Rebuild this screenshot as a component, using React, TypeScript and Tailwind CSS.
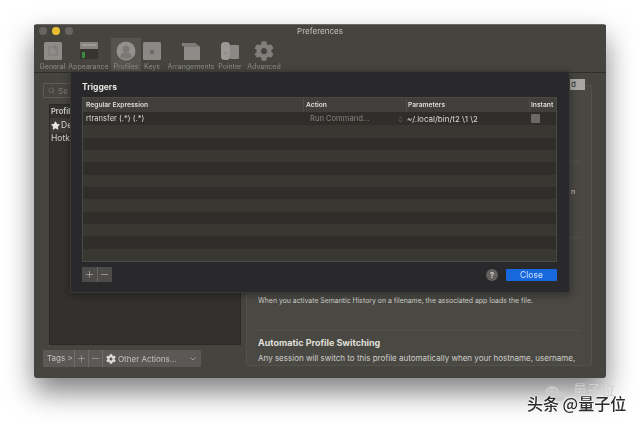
import { FaCog, FaStar, FaWeixin } from 'react-icons/fa'
import { ChevronDown, ChevronsUpDown, Minus, Plus, Search } from 'lucide-react'

const ui = "font-['Inter','Liberation_Sans',sans-serif]"

const GeneralIcon = () => (
  <svg width="20" height="20" viewBox="0 0 20 20">
    <rect x="1" y="1" width="18" height="18" rx="1.5" fill="#8d8c88" />
    <rect x="6" y="6" width="8" height="8" fill="none" stroke="#7a7975" strokeWidth="1" />
    <path d="M12 4v5" stroke="#767571" strokeWidth="1" />
  </svg>
)

const AppearanceIcon = () => (
  <svg width="20" height="20" viewBox="0 0 20 20">
    <rect x="1" y="1" width="18" height="7" fill="#85847f" />
    <rect x="3" y="3" width="14" height="2" fill="#9c9b97" />
    <rect x="1" y="8" width="18" height="10" fill="#35342f" />
    <rect x="3" y="11" width="3" height="6" fill="#3c8a3f" />
  </svg>
)

const ProfileIcon = () => (
  <svg width="20" height="20" viewBox="0 0 20 20">
    <circle cx="10" cy="10" r="9.5" fill="#92918d" />
    <circle cx="10" cy="8" r="3.5" fill="#7a7975" />
    <path d="M4 16c1-4 3-4.5 6-4.5s5 .5 6 4.5c-3 2.6-9 2.6-12 0z" fill="#7a7975" />
  </svg>
)

const KeysIcon = () => (
  <svg width="20" height="20" viewBox="0 0 20 20">
    <rect x="1" y="1" width="18" height="18" rx="1.5" fill="#8a8985" />
    <path d="M8 9l4 4M12 9l-4 4" stroke="#666561" strokeWidth="1.5" />
  </svg>
)

const ArrangementsIcon = () => (
  <svg width="20" height="20" viewBox="0 0 20 20">
    <path d="M1 2h13l5 4v13H3V5H1z" fill="#8d8c88" />
    <path d="M1 2h13l5 4H3z" fill="#7b7a76" />
  </svg>
)

const PointerIcon = () => (
  <svg width="20" height="20" viewBox="0 0 20 20">
    <rect x="1" y="1" width="9" height="18" rx="3.5" fill="#999894" />
    <rect x="10" y="4" width="9" height="14" rx="1" fill="#8a8985" />
    <circle cx="5.5" cy="12" r="1" fill="#83827e" />
  </svg>
)

const tools = [
  { label: 'General', box: 'w-[27px]', icon: <GeneralIcon /> },
  { label: 'Appearance', box: 'w-[45px]', icon: <AppearanceIcon /> },
  { label: 'Profiles', box: 'w-[30px] bg-[#54534e]', icon: <ProfileIcon /> },
  { label: 'Keys', box: 'w-[22px]', icon: <KeysIcon /> },
  { label: 'Arrangements', box: 'w-[56px]', icon: <ArrangementsIcon /> },
  { label: 'Pointer', box: 'w-[22px]', icon: <PointerIcon /> },
  { label: 'Advanced', box: 'w-[46px]', icon: <FaCog size={20} color="#7f7e7a" /> },
]

const Toolbar = () => (
  <div className="h-[48px] shrink-0 relative border-b border-[#2f2e2b] bg-[#45443f]">
    <div className="flex gap-[5px] pl-[5px] pt-[2px]">
      <span className="size-[8px] rounded-full bg-[#666561]" />
      <span className="size-[8px] rounded-full bg-[#e8bf2e]" />
      <span className="size-[8px] rounded-full bg-[#666561]" />
    </div>
    <div className="absolute inset-x-0 top-[1px] text-center text-[8px] leading-[11px] text-[#c4c3bf]">Preferences</div>
    <div className="flex pl-[5px] mt-[3px]">
      {tools.map((t) => (
        <div key={t.label} className={`${t.box} h-[33px] flex flex-col items-center pt-[3px]`}>
          <div className="h-[20px] flex items-center justify-center">{t.icon}</div>
          <div className="mt-[1px] whitespace-nowrap text-[7px] leading-[10px] text-[#8e8d89]">{t.label}</div>
        </div>
      ))}
    </div>
  </div>
)

const ProfilesColumn = () => (
  <div className="w-[198px] shrink-0 flex flex-col">
    <div className="-mt-[1px] h-[15px] w-[60px] rounded-[2px] border border-[#5d5c58] flex items-center gap-[3px] pl-[4px] text-[8px] text-[#7c7b77]">
      <Search size={7} />
      <span>Se</span>
    </div>
    <div className="ml-[6px] mt-[6px] h-[241px] bg-[#32312d] border border-[#2b2a27] text-[8.5px] text-[#d5d4d0]">
      <div className="h-[13px] pl-[1px] leading-[13px] text-[7.5px] font-semibold">Profile Name</div>
      <div className="flex items-center gap-[1px] h-[15px] pl-[1px] bg-[#3d3c38]">
        <FaStar size={9} color="#e6e5e1" />
        <span>Default</span>
      </div>
      <div className="h-[10px] pl-[1px] leading-[10px]">Hotkey Window</div>
    </div>
    <div className="mt-[5px] h-[17px] w-[158px] flex items-center rounded-[1px] bg-[#5a5955] text-[8px] text-[#c4c3bf]">
      <span className="w-[32px] pl-[4px] border-r border-[#6d6c68] leading-[17px]">Tags &gt;</span>
      <span className="w-[14px] h-full flex items-center justify-center border-r border-[#6d6c68]"><Plus size={11} strokeWidth={1.1} /></span>
      <span className="w-[14px] h-full flex items-center justify-center border-r border-[#6d6c68]"><Minus size={11} strokeWidth={1.1} /></span>
      <span className="flex flex-1 items-center gap-[2px] pl-[3px]">
        <FaCog size={10} color="#dddcd8" />
        <span>Other Actions...</span>
        <ChevronDown size={8} className="ml-auto mr-[4px]" />
      </span>
    </div>
  </div>
)

const DetailPanel = () => (
  <div className="ml-[5px] w-[346px] h-[281px] mt-[1px] bg-[#494844] border border-[#52514d] rounded-[2px] px-[11px] flex flex-col text-[#d2d1cc] opacity-[0.99]">
    <div className="mt-[75px] h-px bg-[#52514d]" />
    <p className="mt-[25px] h-[10px] pl-[313px] leading-[10px] text-[7px]">n</p>
    <div className="mt-[40px] h-px bg-[#52514d]" />
    <p className="mt-[57px] leading-[12px] text-[6.9px] whitespace-nowrap">When you activate Semantic History on a filename, the associated app loads the file.</p>
    <div className="mt-[23px] h-px bg-[#52514d]" />
    <p className="mt-[6px] leading-[12px] font-bold text-[9px] text-[#e2e1dc]">Automatic Profile Switching</p>
    <p className="mt-[3px] leading-[12px] text-[8px] whitespace-nowrap">Any session will switch to this profile automatically when your hostname, username,</p>
  </div>
)

const rows = Array.from({ length: 12 }, (_, i) => i)

const TriggersSheet = () => (
  <div className="absolute left-[70px] top-[71px] w-[500px] h-[222px] bg-[#29282a] border border-[#3a3936] pl-[11px] pr-[12px] flex flex-col text-[#d8d7d3] shadow-[0_2px_8px_rgba(0,0,0,0.35)]">
    <div className="h-[25px] pt-[10px] text-[8.5px] leading-[11px] font-bold text-[#e6e5e1]">Triggers</div>
    <div className="border border-[#4a4944] bg-[#35342f]">
      <div className="flex h-[15px] bg-[#403f3b] border-b border-[#2f2e2b] text-[6.7px] leading-[14px] font-semibold text-[#dddcd8]">
        <div className="w-[221px] pl-[3px] border-r border-[#4d4c47]">Regular Expression</div>
        <div className="w-[103px] pl-[2px] border-r border-[#4d4c47]">Action</div>
        <div className="w-[123px] pl-[1px] border-r border-[#4d4c47]">Parameters</div>
        <div className="flex-1 pl-[1px]">Instant</div>
      </div>
      <div className="h-[148px] flex flex-col">
        {rows.map((i) => (
          <div key={i} className={`flex-1 ${i % 2 === 0 ? 'bg-[#2f2e2a]' : 'bg-[#383732]'}`}>
            {i === 0 && (
              <div className="flex h-full items-center text-[7.6px] text-[#dad9d5]">
                <div className="w-[221px] pl-[3px]">rtransfer (.*) (.*)</div>
                <div className="w-[103px] pl-[6px] pr-[3px] flex items-center justify-between text-[#85847f]">
                  <span>Run Command...</span>
                  <ChevronsUpDown size={7} />
                </div>
                <div className="w-[123px] text-[8px]">~/.local/bin/t2 \1 \2</div>
                <div className="ml-[1px] -mt-[1px] size-[9px] rounded-[1px] bg-[#6b6a67]" />
              </div>
            )}
          </div>
        ))}
      </div>
    </div>
    <div className="mt-[5px] flex items-center">
      <div className="flex h-[15px] w-[30px] bg-[#4c4b49] text-[#c9c8c4]">
        <span className="flex-1 flex items-center justify-center border-r border-[#66655f]"><Plus size={11} strokeWidth={1.2} /></span>
        <span className="flex-1 flex items-center justify-center"><Minus size={11} strokeWidth={1.2} /></span>
      </div>
      <span className="ml-auto size-[12px] rounded-full bg-[#62615f] text-center text-[8px] leading-[12px] font-bold text-[#cfcecb]">?</span>
      <button type="button" className="ml-[8px] h-[12px] w-[51px] rounded-[1px] bg-[#1668dc] text-[8.5px] leading-[12px] text-[#cfe2fb]">Close</button>
    </div>
  </div>
)

const Watermark = () => (
  <div className="absolute left-[527px] top-[384px] w-[105px] h-[30px]">
    <FaWeixin size={20} color="#c9c9c9" className="absolute left-[18px] top-0" />
    <span className="absolute left-[46px] top-0 text-[14px] leading-[10px] text-[#d0d0d0] font-['Noto_Sans_CJK_SC',sans-serif]">量子位</span>
    <span className="absolute left-0 top-[10px] whitespace-nowrap text-[16px] leading-[18px] font-medium text-[#2b2b2b] [text-shadow:0_0_2px_#fff,0_0_2px_#fff] font-['Noto_Sans_CJK_SC',sans-serif]">头条 @量子位</span>
  </div>
)

export default function App() {
  return (
    <div className={`relative w-[640px] h-[424px] overflow-hidden bg-white ${ui}`}>
      <div className="pt-[24px] pl-[34px] blur-[0.5px]">
        <div className="w-[572px] h-[354px] rounded-[3px] bg-[#45443f] border-t border-[#6a6965] flex flex-col shadow-[0_14px_28px_rgba(0,0,0,0.5)]">
          <Toolbar />
          <div className="flex pl-[9px] pt-[11px]">
            <ProfilesColumn />
            <DetailPanel />
          </div>
        </div>
        <div className="absolute left-[570px] top-[79px] w-[15px] h-[11px] bg-[#a8a7a3] text-[8px] leading-[11px] pl-[1px] text-[#33322e]">d</div>
        <TriggersSheet />
      </div>
      <Watermark />
    </div>
  )
}
